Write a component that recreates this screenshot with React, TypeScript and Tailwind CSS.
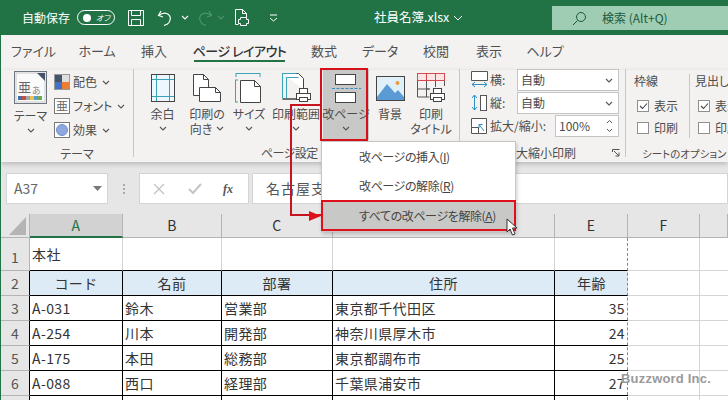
import React from "react";

const Chev = ({ className = "" }: { className?: string }) => (
  <svg width="8" height="5" viewBox="0 0 8 5" className={className}>
    <path d="M1 1l3 3 3-3" fill="none" stroke="#555" strokeWidth="1.1" />
  </svg>
);

const ThemeIcon = () => (
  <svg width="33" height="33" viewBox="0 0 33 33">
    <rect x="0.5" y="0.5" width="32" height="32" fill="#fff" stroke="#6f7680" />
    <rect x="2" y="2" width="29" height="29" fill="#fafafa" stroke="#c8c8c8" />
    <path d="M23 2h8v8z" fill="#44546a" />
    <text x="4" y="21" fontSize="13" fill="#666" fontFamily="'Noto Sans CJK JP'">亜</text>
    <text x="18" y="23" fontSize="9" fill="#888" fontFamily="'Noto Sans CJK JP'">あ</text>
    <rect x="4" y="25" width="4" height="4" fill="#44729c" />
    <rect x="8" y="25" width="4" height="4" fill="#c0504d" />
    <rect x="12" y="25" width="4" height="4" fill="#a5a5a5" />
    <rect x="16" y="25" width="4" height="4" fill="#e8c54a" />
    <rect x="20" y="25" width="4" height="4" fill="#5b9bd5" />
    <rect x="24" y="25" width="4" height="4" fill="#70ad47" />
  </svg>
);
const ColorIcon = () => (
  <svg width="16" height="16" viewBox="0 0 16 16">
    <rect width="8" height="8" fill="#44546a" />
    <rect x="8" width="8" height="8" fill="#e0dedc" />
    <rect y="8" width="8" height="8" fill="#4472c4" />
    <rect x="8" y="8" width="8" height="8" fill="#ed7d31" />
    <rect x="0.5" y="0.5" width="15" height="15" fill="none" stroke="#999" />
  </svg>
);
const FontIcon = () => (
  <svg width="16" height="16" viewBox="0 0 16 16">
    <rect x="0.5" y="0.5" width="15" height="15" fill="#fff" stroke="#777" />
    <text x="2" y="13" fontSize="12" fill="#666" fontFamily="'Noto Sans CJK JP'">亜</text>
  </svg>
);
const EffectIcon = () => (
  <svg width="16" height="16" viewBox="0 0 16 16">
    <rect x="0.5" y="0.5" width="15" height="15" fill="#fff" stroke="#777" />
    <circle cx="8" cy="8" r="5.5" fill="#8fa8dc" stroke="#6f8fcf" />
  </svg>
);
const MarginIcon = () => (
  <svg width="24" height="28" viewBox="0 0 24 28">
    <rect x="0.5" y="0.5" width="23" height="27" fill="#eef7fb" stroke="#444" />
    <path d="M5.5 1v26M18.5 1v26M1 5.5h22M1 22.5h22" stroke="#3ba3b8" />
  </svg>
);
const OrientIcon = () => (
  <svg width="28" height="28" viewBox="0 0 28 28">
    <path d="M0.5 0.5h10l5 5v16h-15z" fill="#fff" stroke="#444" />
    <path d="M10.5 0.5v5h5" fill="none" stroke="#444" />
    <path d="M6.5 13.5h16l5 5v9h-21z" fill="#fff" stroke="#444" />
    <path d="M22.5 13.5v5h5" fill="none" stroke="#444" />
  </svg>
);
const SizeIcon = () => (
  <svg width="28" height="30" viewBox="0 0 28 30">
    <path d="M1 0.5h24M1 0v4M25 0v4" stroke="#3ba3b8" fill="none" />
    <path d="M0.5 7v22M0 7h3M0 29h3" stroke="#3ba3b8" fill="none" />
    <path d="M5.5 7.5h14l6 6v16h-20z" fill="#fff" stroke="#444" />
    <path d="M19.5 7.5v6h6" fill="none" stroke="#444" />
  </svg>
);
const Printer = ({ x, y }: { x: number; y: number }) => (
  <g transform={`translate(${x} ${y})`}>
    <rect x="3.5" y="0.5" width="8" height="5" fill="#fff" stroke="#444" />
    <rect x="0.5" y="5.5" width="14" height="6" fill="#fff" stroke="#444" />
    <rect x="3.5" y="9.5" width="8" height="4" fill="#fff" stroke="#444" />
  </g>
);
const AreaIcon = () => (
  <svg width="29" height="30" viewBox="0 0 29 30">
    <path d="M0.5 0.5h16l5 5v11M21 26H0.5z" fill="#fff" stroke="#444" />
    <path d="M0.5 0.5h14M0.5 0.5v25M4.5 4.5v21M4.5 4.5h12" fill="none" stroke="#3ba3b8" />
    <Printer x={14} y={15} />
  </svg>
);
const BreakIcon = () => (
  <svg width="31" height="29" viewBox="0 0 31 29">
    <rect x="4.5" y="0.5" width="20" height="10" fill="#fff" stroke="#444" />
    <path d="M1 14.5h29" stroke="#3a8fc0" strokeDasharray="3 1.5" />
    <rect x="4.5" y="18.5" width="20" height="10" fill="#fff" stroke="#444" />
  </svg>
);
const PictureIcon = () => (
  <svg width="29" height="25" viewBox="0 0 29 25">
    <rect x="0.5" y="0.5" width="28" height="24" fill="#dff0f8" stroke="#444" />
    <path d="M1 21l10-13 8 9 3-3 6 7v3H1z" fill="#5b9bd5" />
    <circle cx="21.5" cy="7" r="2" fill="#ed9b40" />
  </svg>
);
const TitleIcon = () => (
  <svg width="29" height="30" viewBox="0 0 29 30">
    <rect x="0.5" y="0.5" width="27" height="7" fill="#fbe5e5" stroke="#d9484f" />
    <path d="M9.5 0v8M18.5 0v8" stroke="#d9484f" />
    <path d="M0.5 8v16h12M9.5 8v16M0.5 16h12M18.5 8v6M27.5 8v5M9 16h4" fill="none" stroke="#555" />
    <Printer x={13} y={15} />
  </svg>
);

const LargeBtn = ({ w, icon, l1, l2, chev, active }: { w: string; icon: React.ReactNode; l1: string; l2?: React.ReactNode; chev?: boolean; active?: boolean }) => (
  <div className={`${w} ${active ? "bg-[#c8c8c6]" : ""} h-[71px] flex flex-col items-center shrink-0`}>
    <div className="h-[38px] flex items-center justify-center shrink-0">{icon}</div>
    <div className="h-[14px] leading-[14px] whitespace-nowrap">{l1}</div>
    <div className="h-[15px] leading-[15px] whitespace-nowrap flex items-center justify-center gap-[4px]">
      {l2}
      {chev && <Chev />}
    </div>
  </div>
);

const SmallRow = ({ icon, label, w = "" }: { icon: React.ReactNode; label: string; w?: string }) => (
  <div className={`flex items-center h-[24px] ${w}`}>
    {icon}
    <span className="ml-[3px] whitespace-nowrap">{label}</span>
    <Chev className="ml-[5px]" />
  </div>
);

const Check = ({ on }: { on?: boolean }) => (
  <div className="w-[12px] h-[12px] border border-[#8f8f8f] bg-white flex items-center justify-center shrink-0">
    {on && (
      <svg width="9" height="8" viewBox="0 0 9 8">
        <path d="M1 4l2.5 2.5L8 1.5" fill="none" stroke="#444" strokeWidth="1.1" />
      </svg>
    )}
  </div>
);

const Select = ({ v }: { v: string }) => (
  <div className="w-[102px] h-[22px] bg-white border border-[#c4c4c4] flex items-center justify-between pl-[3px] pr-[5px]">
    <span>{v}</span>
    <Chev />
  </div>
);

const WidthIcon = () => (
  <svg width="17" height="18" viewBox="0 0 17 18">
    <path d="M0.5 0.5h16v9h-16z" fill="#fff" stroke="#555" />
    <path d="M1 13.5h15M1 13.5l3-2.5M1 13.5l3 2.5M16 13.5l-3-2.5M16 13.5l-3 2.5" fill="none" stroke="#2e8fc4" />
  </svg>
);
const HeightIcon = () => (
  <svg width="17" height="18" viewBox="0 0 17 18">
    <path d="M3.5 1v15M3.5 1L1 4M3.5 1L6 4M3.5 16L1 13M3.5 16L6 13" fill="none" stroke="#2e8fc4" />
    <rect x="9.5" y="1.5" width="6" height="15" fill="#fff" stroke="#555" />
  </svg>
);
const ScaleIcon = () => (
  <svg width="16" height="16" viewBox="0 0 16 16">
    <path d="M0.5 9.5v-9h15v15h-8v-6z" fill="#fff" stroke="#555" />
    <path d="M0.5 9.5h7v6h-7z" fill="#fff" stroke="#555" />
    <path d="M13 13L8 6.5M8 6.5v3.5M8 6.5h3.5" fill="none" stroke="#2e8fc4" />
  </svg>
);

const tabs = [
  ["ファイル", "w-[37px] ml-[14px]"],
  ["ホーム", "w-[32px] ml-[29px]"],
  ["挿入", "w-[26px] ml-[28px]"],
  ["ページ レイアウト", "w-[91px] ml-[27px] font-medium text-[#333] tracking-[-0.5px]"],
  ["数式", "w-[26px] ml-[26px]"],
  ["データ", "w-[32px] ml-[27px]"],
  ["校閲", "w-[26px] ml-[27px]"],
  ["表示", "w-[26px] ml-[27px]"],
  ["ヘルプ", "w-[32px] ml-[27px]"],
];

const cols = ["A", "B", "C", "D", "E", "F", ""];
const rows = [
  ["コード", "名前", "部署", "住所", "年齢"],
  ["A-031", "鈴木", "営業部", "東京都千代田区", "35"],
  ["A-254", "川本", "開発部", "神奈川県厚木市", "24"],
  ["A-175", "本田", "総務部", "東京都調布市", "25"],
  ["A-088", "西口", "経理部", "千葉県浦安市", "27"],
  ["", "", "", "", ""],
];

export default function App() {
  return (
    <div className="relative w-[728px] h-[400px] overflow-hidden bg-white border-l border-[#217346] text-[#444] text-[12px] font-['Noto_Sans_CJK_JP','Noto_Sans',sans-serif] [font-feature-settings:'palt'] flex flex-col">
      {/* title bar */}
      <div className="h-[35px] shrink-0 -ml-px bg-[#217346] text-white flex items-center relative">
        <span className="ml-[22px] w-[50px] text-[12px] whitespace-nowrap">自動保存</span>
        <div className="ml-[5px] w-[38px] h-[15px] rounded-full border border-white flex items-center pl-[5px]">
          <div className="w-[8px] h-[8px] rounded-full bg-white" />
          <span className="ml-[5px] text-[8px] leading-none italic">オフ</span>
        </div>
        <svg width="16" height="16" viewBox="0 0 16 16" className="ml-[13px]">
          <path d="M0.5 0.5h15v15h-15zM3.5 0.5v5h9v-5M3.5 15.5v-6h9v6" fill="none" stroke="#fff" />
        </svg>
        <svg width="16" height="16" viewBox="0 0 16 16" className="ml-[13px]">
          <path d="M4 1L1.5 5.5 6 7M1.5 5.5C5 3 9 2.5 11.5 4.5c3 2.5 2 7-1 9.5L7 15.5" fill="none" stroke="#fff" strokeWidth="1.2" />
        </svg>
        <Chev className="ml-[8px] [&_path]:stroke-white" />
        <svg width="16" height="16" viewBox="0 0 16 16" className="ml-[8px]">
          <path d="M12 1l2.5 4.5L10 7M14.5 5.5C11 3 7 2.5 4.5 4.5c-3 2.5-2 7 1 9.5L9 15.5" fill="none" stroke="#4f9272" strokeWidth="1.2" />
        </svg>
        <Chev className="ml-[4px] [&_path]:stroke-[#4f9272]" />
        <svg width="16" height="17" viewBox="0 0 16 17" className="ml-[9px]">
          <path d="M1.5 15.5v-15h7l4 4v4M1.5 15.5h3M8.5 0.5v4h4" fill="none" stroke="#fff" />
          <path d="M6.5 8.5h6v2h2v4h-2v2h-6v-2h-2v-4h2z" fill="none" stroke="#fff" />
        </svg>
        <svg width="9" height="8" viewBox="0 0 9 8" className="ml-[19px]">
          <path d="M1 1h7M1 4l3.5 3L8 4" fill="none" stroke="#fff" />
        </svg>
        <span className="ml-[96px] text-[12.5px] whitespace-nowrap">社員名簿.xlsx</span>
        <svg width="10" height="6" viewBox="0 0 10 6" className="ml-[4px]">
          <path d="M1 1l4 4 4-4" fill="none" stroke="#fff" />
        </svg>
        <div className="absolute right-0 top-[6px] w-[176px] h-[24px] bg-[#9fcdb3] flex items-center text-[#1d5a3c]">
          <svg width="15" height="15" viewBox="0 0 15 15" className="ml-[20px]">
            <circle cx="9" cy="6" r="4.5" fill="none" stroke="#1d5a3c" />
            <path d="M5.5 9.5L1 14" stroke="#1d5a3c" />
          </svg>
          <span className="ml-[15px] text-[12px] whitespace-nowrap">検索 (Alt+Q)</span>
        </div>
      </div>

      {/* tabs */}
      <div className="h-[35px] shrink-0 bg-[#f3f2f1] flex items-start pt-[7px] text-[13px] text-[#505050]">
        {tabs.map(([t, c], i) => (
          <div key={i} className={`${c} h-[20px] leading-[18px] whitespace-nowrap relative flex justify-center`}>
            {t}
            {i === 3 && <div className="absolute left-0 right-0 top-[18px] h-[2px] bg-[#217346]" />}
          </div>
        ))}
      </div>

      {/* ribbon */}
      <div className="h-[92px] shrink-0 bg-[#f3f2f1] flex shadow-[0_2px_5px_rgba(0,0,0,0.2)] relative z-[1] text-[#4d4d4d]">
        <div className="w-[132px] shrink-0 flex flex-col">
          <div className="h-[75px] flex">
            <div className="ml-[13px] w-[33px] flex flex-col items-center pt-[1px]">
              <ThemeIcon />
              <div className="mt-[5px] h-[14px] leading-[14px] whitespace-nowrap">テーマ</div>
              <div className="h-[15px] flex items-center"><Chev /></div>
            </div>
            <div className="ml-[7px] flex flex-col pt-[0px]">
              <SmallRow icon={<ColorIcon />} label="配色" />
              <SmallRow icon={<FontIcon />} label="フォント" />
              <SmallRow icon={<EffectIcon />} label="効果" />
            </div>
          </div>
          <div className="h-[17px] text-center leading-[17px] pl-[20px]">テーマ</div>
        </div>
        <div className="w-[1px] h-[88px] bg-[#c6c6c6] shrink-0 -mt-px" />
        <div className="w-[325px] shrink-0 flex flex-col">
          <div className="h-[71px] flex pl-[10px] -mt-px">
            <LargeBtn w="w-[37px]" icon={<MarginIcon />} l1="余白" chev />
            <LargeBtn w="w-[46px] ml-[3px]" icon={<OrientIcon />} l1="印刷の" l2="向き" chev />
            <LargeBtn w="w-[38px]" icon={<SizeIcon />} l1="サイズ" chev />
            <LargeBtn w="w-[50px] ml-[3px]" icon={<AreaIcon />} l1="印刷範囲" chev />
            <LargeBtn w="w-[46px] ml-[2px]" active icon={<BreakIcon />} l1="改ページ" chev />
            <LargeBtn w="w-[36px] ml-[3px]" icon={<PictureIcon />} l1="背景" />
            <LargeBtn w="w-[42px] ml-[2px]" icon={<TitleIcon />} l1="印刷" l2="タイトル" />
          </div>
          <div className="h-[21px] pt-[4px] leading-[17px] pl-[127px] tracking-[-0.6px]">ページ設定</div>
        </div>
        <div className="w-[1px] h-[88px] bg-[#c6c6c6] shrink-0 -mt-px" />
        <div className="w-[165px] shrink-0 flex flex-col">
          <div className="h-[75px] pl-[11px] -mt-px flex flex-col">
            <div className="flex items-center h-[22px]">
              <WidthIcon /><span className="ml-[2px] w-[27px]">横:</span><Select v="自動" />
            </div>
            <div className="flex items-center h-[22px] mt-px">
              <HeightIcon /><span className="ml-[2px] w-[27px]">縦:</span><Select v="自動" />
            </div>
            <div className="flex items-center h-[22px] mt-px">
              <ScaleIcon /><span className="ml-[3px] w-[65px] whitespace-nowrap">拡大/縮小:</span>
              <div className="w-[64px] h-[22px] bg-white border border-[#c4c4c4] flex items-center justify-between pl-[3px] pr-[5px]">
                <span className="text-[12px]">100%</span>
                <svg width="7" height="14" viewBox="0 0 7 14"><path d="M1 4l2.5-2.5L6 4M1 10l2.5 2.5L6 10" fill="none" stroke="#555" /></svg>
              </div>
            </div>
          </div>
          <div className="h-[18px] flex items-center pl-[22px] relative">
            <span className="ml-[22px] whitespace-nowrap">拡大縮小印刷</span>
            <svg width="8" height="8" viewBox="0 0 8 8" className="absolute left-[152px] top-[5px]">
              <path d="M0.5 3V0.5H7.5M2 2l5 5M7 3.5V7H3.5" fill="none" stroke="#555" />
            </svg>
          </div>
        </div>
        <div className="w-[1px] h-[88px] bg-[#c6c6c6] shrink-0 -mt-px" />
        <div className="flex-1 flex flex-col overflow-hidden">
          <div className="h-[75px] flex">
            <div className="w-[64px] h-[64px] mt-[4px] border-r border-[#c6c6c6] pl-[8px] shrink-0">
              <div className="text-[12px] leading-[16px] mt-[-1px] whitespace-nowrap">枠線</div>
              <div className="flex items-center gap-[5px] mt-[8px] ml-[3px]"><Check on /><span>表示</span></div>
              <div className="flex items-center gap-[5px] mt-[4px] ml-[3px]"><Check /><span>印刷</span></div>
            </div>
            <div className="pl-[5px] h-[64px] mt-[4px] shrink-0">
              <div className="text-[12px] leading-[16px] mt-[-1px] whitespace-nowrap">見出し</div>
              <div className="flex items-center gap-[5px] mt-[8px] ml-[3px]"><Check on /><span>表示</span></div>
              <div className="flex items-center gap-[5px] mt-[4px] ml-[3px]"><Check /><span>印刷</span></div>
            </div>
          </div>
          <div className="h-[17px] leading-[17px] pl-[16px] whitespace-nowrap text-[10.5px]">シートのオプション</div>
        </div>
      </div>

      {/* formula bar */}
      <div className="h-[52px] shrink-0 bg-[#e6e6e6] flex pt-[11px] items-start text-[14px] text-[#666]">
        <div className="ml-[5px] w-[102px] h-[31px] bg-white border border-[#d4d4d4] flex items-center justify-between pl-[7px] pr-[5px]">
          <span>A37</span>
          <svg width="9" height="5" viewBox="0 0 9 5"><path d="M0 0h9L4.5 5z" fill="#777" /></svg>
        </div>
        <div className="w-[31px] h-[31px] flex flex-col items-center justify-center gap-[2px]">
          <div className="w-[2px] h-[2px] bg-[#aaa]" /><div className="w-[2px] h-[2px] bg-[#aaa]" /><div className="w-[2px] h-[2px] bg-[#aaa]" />
        </div>
        <div className="w-[110px] h-[31px] bg-white border border-[#d4d4d4] flex items-center pl-[13px] shrink-0">
          <svg width="12" height="12" viewBox="0 0 12 12"><path d="M1 1l10 10M11 1L1 11" stroke="#c4c4c4" strokeWidth="1.4" /></svg>
          <svg width="14" height="12" viewBox="0 0 14 12" className="ml-[23px]"><path d="M1 6l4 4 8-9" fill="none" stroke="#c4c4c4" strokeWidth="2" /></svg>
          <i className="ml-[21px] font-['Liberation_Serif',serif] font-bold text-[12px] text-[#555]">fx</i>
        </div>
        <div className="ml-[3px] flex-1 h-[31px] bg-white border border-[#d4d4d4] flex items-center pl-[13px] text-[14px] tracking-[1px] text-[#555]">
          名古屋支店
        </div>
      </div>

      {/* sheet */}
      <div className="grid grid-cols-[29px_93px_99px_111px_222px_73px_72px_28px] grid-rows-[24px_33px_25px_25px_25px_25px_25px_25px] text-[14px] text-[#333] tracking-[0.4px] [font-feature-settings:normal]">
        <div className="bg-[#e6e6e6] border-r border-b border-[#b4b4b4] flex items-end justify-end pr-[3px] pb-[2px]">
          <svg width="17" height="18" viewBox="0 0 17 18"><path d="M17 0v18H0z" fill="#b4b4b4" /></svg>
        </div>
        {cols.map((c, i) => (
          <div key={i} className={i === 0 ? "bg-[#d2d2d2] border-b-2 border-[#217346] text-[#217346] flex items-center justify-center border-r border-r-[#b4b4b4]" : "bg-[#e6e6e6] border-r border-b border-[#b4b4b4] flex items-center justify-center"}>{c}</div>
        ))}

        <div className="bg-[#e6e6e6] border-r border-b border-[#b4b4b4] flex items-end justify-center pb-[2px] text-[#555]">1</div>
        <div className="border-r border-b border-r-[#d4d4d4] border-b-black flex items-center pl-[2px]">本社</div>
        <div className="border-r border-b border-r-[#d4d4d4] border-b-black" />
        <div className="border-r border-b border-r-[#d4d4d4] border-b-black" />
        <div className="border-r border-b border-r-[#d4d4d4] border-b-black" />
        <div className="border-b border-b-black" />
        <div className="border-r border-b border-[#d4d4d4]" />
        <div className="border-b border-[#d4d4d4]" />

        {rows.map((r, i) => (
          <React.Fragment key={i}>
            <div className="bg-[#e6e6e6] border-r border-b border-r-black border-b-[#b4b4b4] flex items-center justify-center text-[#555]">{i + 2}</div>
            {r.map((v, j) => (
              <div
                key={j}
                className={`border-b border-b-black flex items-center whitespace-nowrap ${j < 4 ? "border-r border-r-black" : ""} ${i === 0 ? "bg-[#ddebf7] justify-center" : j === 4 ? "justify-end pr-[3px]" : "pl-[2px]"}`}
              >
                {v}
              </div>
            ))}
            <div className="border-r border-b border-[#d4d4d4]" />
            <div className="border-b border-[#d4d4d4]" />
          </React.Fragment>
        ))}
      </div>

      {/* overlays */}
      <div className="absolute left-[626px] top-[238px] h-[162px] border-l border-dashed border-[#888]" />
      <div className="absolute left-[620px] top-[369px] text-[13px] font-bold text-[#9a9a9a] font-['Liberation_Sans',sans-serif] tracking-[0.2px] whitespace-nowrap [font-feature-settings:normal]">Buzzword Inc.</div>

      {/* menu */}
      <div className="absolute z-10 left-[320px] top-[141px] w-[195px] h-[91px] bg-white border border-[#c6c6c6] shadow-[1px_2px_4px_rgba(0,0,0,0.2)] text-[12px] text-[#444] tracking-[-0.4px] flex flex-col">
        <div className="h-[29px] flex items-center pl-[37px] mt-px">改ページの挿入(<u>I</u>)</div>
        <div className="h-[29px] flex items-center pl-[37px]">改ページの解除(<u>R</u>)</div>
        <div className="h-[31px] flex items-center pl-[36px] bg-[#c8c8c6] border-[2px] border-[#e0101a] -mx-px">すべての改ページを解除(<u>A</u>)</div>
      </div>

      {/* red annotations */}
      <div className="absolute z-10 left-[319px] top-[68px] w-[48px] h-[73px] border-[2px] border-[#d4101a]" />
      <div className="absolute z-10 left-[289px] top-[104px] w-[31px] h-[112px] border-l-2 border-t-2 border-b-2 border-[#c8141e]" />
      <svg width="12" height="10" viewBox="0 0 12 10" className="absolute z-10 left-[308px] top-[211px]"><path d="M0 0l12 5-12 5z" fill="#e0101a" /></svg>

      {/* cursor */}
      <svg width="13" height="18" viewBox="0 0 13 18" className="absolute z-10 left-[505px] top-[218px]">
        <path d="M1 1v13l3-3 2.5 6 2.5-1-2.5-6H11z" fill="#fff" stroke="#333" />
      </svg>
    </div>
  );
}
